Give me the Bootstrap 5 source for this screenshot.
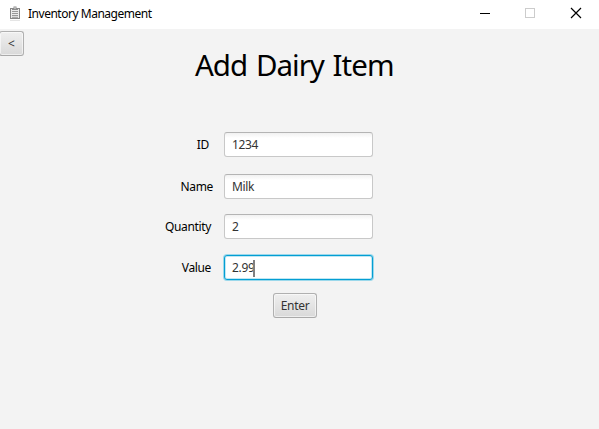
<!DOCTYPE html>
<html lang="en">
<head>
<meta charset="utf-8">
<meta name="viewport" content="width=device-width, initial-scale=1">
<title>Inventory Management</title>
<link rel="stylesheet" href="https://cdn.jsdelivr.net/npm/bootstrap@5.3.0/dist/css/bootstrap.min.css">
<style>
body{font-family:"Segoe UI","Noto Sans",sans-serif;font-size:12px;line-height:16px;color:#000;background:#f3f3f3}
.titlebar{height:29px;background:#fff}
.app-icon{margin:0 7px 3px 9px}
.app-name{letter-spacing:-.48px;padding-bottom:2px}
.win-controls svg{width:46px;height:29px}
.win-controls svg:last-child{width:45px}
.fx-btn.btn{height:25px;padding:0 7px;font-size:12px;line-height:22px;color:#333;border:1px solid #b0b0b0;border-bottom-color:#a9a9a9;border-radius:3px;background:linear-gradient(#efefef,#d9d9d9);box-shadow:inset 0 0 0 1px rgba(255,255,255,.55)}
.back-btn.btn{width:25px;margin:2px 0 0 -1px;padding:0}
.enter-btn.btn{width:44px;padding:0;margin-left:273px;line-height:23px;letter-spacing:-.3px}
.screen-title{font-size:29.5px;line-height:40px;font-weight:400;margin:-11px 0 0 195px;letter-spacing:-.98px;word-spacing:2px;white-space:nowrap}
.entry-form{padding-top:47px}
.field-label{width:224px;text-align:right;letter-spacing:-.35px}
.gap-id{padding-right:15px}
.gap-name{padding-right:11px}
.gap-value{padding-right:13px}
.form-control.fx-input{width:149px;height:25px;padding:1px 7px 0;font-size:12px;line-height:22px;color:#333;letter-spacing:-.35px;border:1px solid #c8c8c8;border-top-color:#b4b4b4;border-radius:3px;background:linear-gradient(#f1f1f1,#fff 5px)}
.form-control.fx-input.is-active{border-color:#039ed3;background:#fff;box-shadow:0 0 0 1px #9bd8eb,inset 0 0 0 1px #c0e7f3}
.caret{width:1.5px;height:17px;margin-left:-1px;background:#808080}
.after-id{margin-bottom:17px}
.after-name{margin-bottom:15px}
.after-qty{margin-bottom:16px}
.after-value{margin-bottom:13px}
</style>
<script src="https://cdn.jsdelivr.net/npm/bootstrap@5.3.0/dist/js/bootstrap.bundle.min.js"></script>
</head>
<body class="overflow-hidden">
<header class="titlebar d-flex align-items-center">
  <svg class="app-icon" width="12" height="16" viewBox="0 0 12 16" aria-hidden="true">
    <path d="M1 3h10v11H1z" fill="#888"/><path d="M2 4h8v9H2z" fill="#ececec"/>
    <path d="M3 5V3h1.500V1.500h3V3H9v2z" fill="#8b8b8b"/><path d="M5 2.500h2v1H5z" fill="#ddd"/>
    <path d="M3 6.500h6M3 8.500h6M3 10.500h6M3 12.300h6" stroke="#999" stroke-width="1"/>
    <path d="M1 15.500h10" stroke="#e5e5e5"/>
  </svg>
  <span class="app-name">Inventory Management</span>
  <div class="win-controls d-flex ms-auto" aria-hidden="true">
    <svg viewBox="0 0 46 29" shape-rendering="crispEdges"><path d="M18 13h10v1H18z"/></svg>
    <svg viewBox="0 0 46 29" shape-rendering="crispEdges"><path d="M17.500 8.500h9v9h-9z" fill="none" stroke="#ccc"/></svg>
    <svg viewBox="0 0 45 29"><path d="M17 8l10 10M27 8L17 18" fill="none" stroke="#000" stroke-width="1.200"/></svg>
  </div>
</header>
<main>
  <button type="button" class="btn fx-btn back-btn d-block">&lt;</button>
  <h1 class="screen-title">Add Dairy Item</h1>
  <form class="entry-form">
    <div class="d-flex align-items-center after-id"><span class="field-label gap-id">ID</span><div class="form-control fx-input">1234</div></div>
    <div class="d-flex align-items-center after-name"><span class="field-label gap-name">Name</span><div class="form-control fx-input">Milk</div></div>
    <div class="d-flex align-items-center after-qty"><span class="field-label gap-value">Quantity</span><div class="form-control fx-input">2</div></div>
    <div class="d-flex align-items-center after-value"><span class="field-label gap-value">Value</span><div class="form-control fx-input is-active d-flex align-items-center">2.99<span class="caret"></span></div></div>
    <button type="button" class="btn fx-btn enter-btn d-block">Enter</button>
  </form>
</main>
</body>
</html>
